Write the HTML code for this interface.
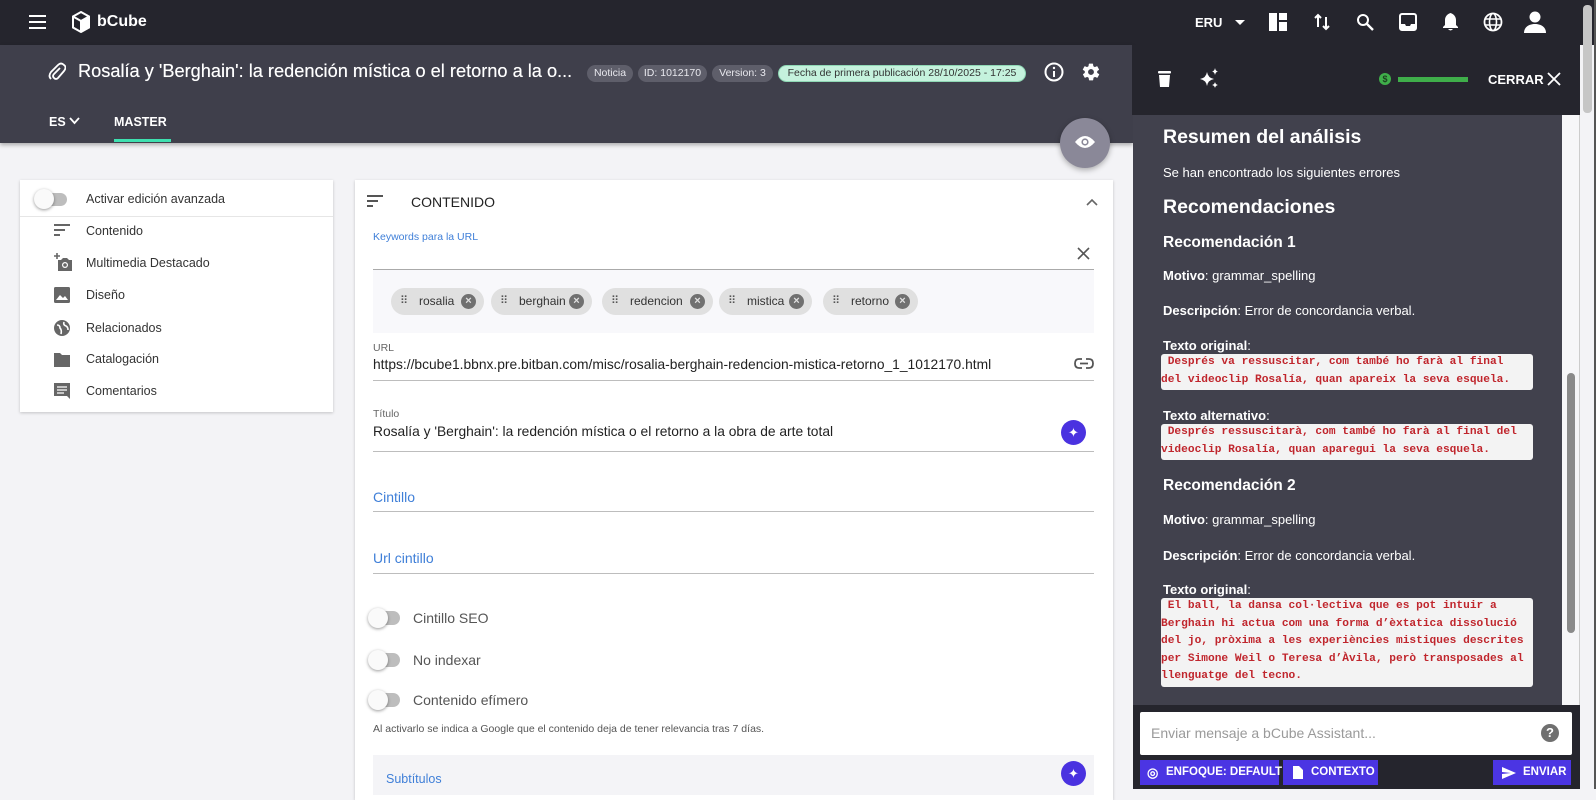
<!DOCTYPE html>
<html><head><meta charset="utf-8"><style>
*{box-sizing:border-box;margin:0;padding:0}
body{width:1596px;height:789px;overflow:hidden;background:#f3f3f6;font-family:"Liberation Sans",sans-serif;position:relative;color:#333}
.a{position:absolute}
.top{left:0;top:0;width:1596px;height:45px;background:#25252d}
.hdr{left:0;top:45px;width:1133px;height:98px;background:#3f3f4b;box-shadow:0 2px 4px rgba(0,0,0,.3)}
.w{color:#fff}
.badge{top:65px;height:17px;border-radius:9px;background:#5e5e6a;color:#e8e8ee;font-size:10.5px;line-height:17px;text-align:center;white-space:nowrap}
.card{background:#fff;box-shadow:0 1px 3px rgba(0,0,0,.2)}
.si{left:86px;font-size:12.5px;color:#333}
.ic{left:54px;width:16px;height:16px}
.lbl{font-size:10.5px;color:#3f7fd8}
.line{height:1px;background:#bdbdbd}
.chip{top:288px;height:27px;border-radius:14px;background:#e0e0e0;font-size:12px;color:#333;line-height:27px}
.chip .dots{position:absolute;left:9px;top:0;font-size:11px;color:#555;letter-spacing:-1px}
.chip .t{position:absolute;left:28px}
.chip .x{position:absolute;right:8px;top:6px;width:15px;height:15px;border-radius:50%;background:#707070;color:#e0e0e0;font-size:11px;line-height:15px;text-align:center;font-weight:bold}
.tg{left:372px;width:28px;height:14px;border-radius:7px;background:#bdbdbd}
.tg:after{content:"";position:absolute;left:-4px;top:-3px;width:20px;height:20px;border-radius:50%;background:#fafafa;box-shadow:0 1px 3px rgba(0,0,0,.4)}
.ai{width:25px;height:25px;border-radius:50%;background:#4a32e0;color:#fff;font-size:13px;line-height:25px;text-align:center}
.pc{left:1163px;color:#fff;font-size:13px}
.pc b{font-weight:bold}
.code{left:1161px;width:372px;background:#f3f3f3;border-radius:3px;color:#c0262d;font-family:"Liberation Mono",monospace;font-size:11.2px;line-height:17.5px;white-space:pre;font-weight:bold}
.btn{top:760px;height:25px;background:#4b35e3;color:#fff;font-size:11.5px;font-weight:bold;line-height:25px;white-space:nowrap}
</style></head><body>
<div class="a top"></div>
<div class="a" style="left:29px;top:15px;width:17px;height:2px;background:#fff;box-shadow:0 6px 0 #fff,0 12px 0 #fff"></div>
<svg class="a" style="left:71px;top:11px" width="20" height="22" viewBox="0 0 20 22"><path d="M10 1L18 5.5V16.5L10 21L2 16.5V5.5Z M2 5.5L10 10L18 5.5 M10 10V21" fill="none" stroke="#fff" stroke-width="2"/><path d="M10 10L18 5.5V16.5L10 21Z" fill="#fff"/></svg>
<div class="a w" style="left:97px;top:13px;font-size:16px;font-weight:bold">bCube</div>
<div class="a w" style="left:1195px;top:15px;font-size:13px;font-weight:bold">ERU</div>
<div class="a" style="left:1235px;top:20px;border:5px solid transparent;border-top-color:#fff"></div>
<svg class="a" style="left:1269px;top:13px" width="18" height="18"><rect x="0" y="0" width="8" height="18" fill="#fff"/><rect x="10" y="0" width="8" height="7" fill="#fff"/><rect x="10" y="9" width="8" height="9" fill="#fff"/></svg>
<svg class="a" style="left:1313px;top:13px" width="18" height="18"><path d="M5 2V14M2 5L5 2L8 5M13 16V4M10 13L13 16L16 13" stroke="#fff" stroke-width="2" fill="none"/></svg>
<svg class="a" style="left:1356px;top:13px" width="18" height="18"><circle cx="7" cy="7" r="5" stroke="#fff" stroke-width="2" fill="none"/><path d="M11 11L17 17" stroke="#fff" stroke-width="2.4"/></svg>
<svg class="a" style="left:1399px;top:13px" width="18" height="18"><rect x="1" y="1" width="16" height="16" rx="2" stroke="#fff" stroke-width="2" fill="none"/><path d="M1 11H6L7 13H11L12 11H17V17H1Z" fill="#fff"/></svg>
<svg class="a" style="left:1442px;top:12px" width="17" height="20"><path d="M8.5 1C5 2 3 5 3 8V13L1 15V16H16V15L14 13V8C14 5 12 2 8.5 1Z M6 17H11Q8.5 20 6 17Z" fill="#fff"/></svg>
<svg class="a" style="left:1483px;top:12px" width="20" height="20"><circle cx="10" cy="10" r="8.5" stroke="#fff" stroke-width="1.8" fill="none"/><ellipse cx="10" cy="10" rx="3.5" ry="8.5" stroke="#fff" stroke-width="1.6" fill="none"/><path d="M2 7H18M2 13H18" stroke="#fff" stroke-width="1.6"/></svg>
<svg class="a" style="left:1523px;top:10px" width="24" height="24"><circle cx="12" cy="7" r="5.5" fill="#fff"/><path d="M1 23C1 17 6 14 12 14S23 17 23 23Z" fill="#fff"/></svg>

<div class="a hdr"></div>
<svg class="a" style="left:48px;top:62px" width="18" height="20" viewBox="0 0 18 20"><path d="M12 6L6 12Q4 14 6 16Q8 18 10 16L16 9Q19 5 16 3Q13 0 10 3L3 10Q0 14 3 17" stroke="#fff" stroke-width="1.8" fill="none"/></svg>
<div class="a w" style="left:78px;top:61px;font-size:18.2px;white-space:nowrap;text-shadow:0 0 .4px #fff">Rosalía y 'Berghain': la redención mística o el retorno a la o...</div>
<div class="a badge" style="left:587px;width:46px">Noticia</div>
<div class="a badge" style="left:638px;width:69px">ID: 1012170</div>
<div class="a badge" style="left:712px;width:61px">Version: 3</div>
<div class="a badge" style="left:778px;width:248px;background:#c5f2dd;color:#333;border:1px solid #8fd8b5;line-height:15px">Fecha de primera publicación 28/10/2025 - 17:25</div>
<svg class="a" style="left:1044px;top:62px" width="20" height="20"><circle cx="10" cy="10" r="8.5" stroke="#fff" stroke-width="2" fill="none"/><rect x="9" y="9" width="2" height="6" fill="#fff"/><circle cx="10" cy="6" r="1.2" fill="#fff"/></svg>
<svg class="a" style="left:1081px;top:62px" width="20" height="20" viewBox="0 0 24 24"><path fill="#fff" d="M19.4 13c0-.3.1-.7.1-1s0-.7-.1-1l2.1-1.6c.2-.2.2-.4.1-.6l-2-3.5c-.1-.2-.4-.3-.6-.2l-2.5 1c-.5-.4-1.1-.7-1.7-1l-.4-2.7c0-.2-.2-.4-.5-.4h-4c-.2 0-.4.2-.5.4l-.4 2.7c-.6.3-1.1.6-1.7 1l-2.5-1c-.2-.1-.5 0-.6.2l-2 3.5c-.1.2 0 .5.1.6L4.6 11c0 .3-.1.7-.1 1s0 .7.1 1l-2.1 1.6c-.2.2-.2.4-.1.6l2 3.5c.1.2.4.3.6.2l2.5-1c.5.4 1.1.7 1.7 1l.4 2.7c0 .2.2.4.5.4h4c.2 0 .4-.2.5-.4l.4-2.7c.6-.3 1.2-.6 1.7-1l2.5 1c.2.1.5 0 .6-.2l2-3.5c.1-.2.1-.5-.1-.6L19.4 13zM12 15.5c-1.9 0-3.5-1.6-3.5-3.5s1.6-3.5 3.5-3.5 3.5 1.6 3.5 3.5-1.6 3.5-3.5 3.5z"/></svg>
<div class="a w" style="left:49px;top:115px;font-size:12.5px;font-weight:bold">ES</div>
<svg class="a" style="left:69px;top:117px" width="11" height="8"><path d="M1 1L5.5 6L10 1" stroke="#fff" stroke-width="1.8" fill="none"/></svg>
<div class="a w" style="left:114px;top:115px;font-size:12.5px;font-weight:bold">MASTER</div>
<div class="a" style="left:114px;top:139px;width:57px;height:3px;background:#3ee0b0"></div>
<div class="a" style="left:1060px;top:118px;width:50px;height:50px;border-radius:50%;background:#8a8898;box-shadow:0 2px 6px rgba(0,0,0,.3)"></div>
<svg class="a" style="left:1074px;top:133px" width="22" height="18"><path d="M1 9Q11 -3 21 9Q11 21 1 9Z" fill="#fff"/><circle cx="11" cy="9" r="3.6" fill="#8a8898"/><circle cx="11" cy="9" r="2" fill="#fff"/></svg>

<div class="a card" style="left:20px;top:180px;width:313px;height:232px"></div>
<div class="a" style="left:20px;top:216px;width:313px;height:1px;background:#e6e6e6"></div>
<div class="a" style="left:37px;top:193px;width:30px;height:13px;border-radius:7px;background:#bdbdbd"></div>
<div class="a" style="left:34px;top:189px;width:20px;height:20px;border-radius:50%;background:#fafafa;box-shadow:0 1px 3px rgba(0,0,0,.4)"></div>
<div class="a si" style="top:192px">Activar edición avanzada</div>
<svg class="a ic" style="top:223px"><path d="M0 2H16M0 7H11M0 12H6" stroke="#666" stroke-width="2"/></svg>
<div class="a si" style="top:224px">Contenido</div>
<svg class="a ic" style="top:253px;width:18px;height:18px"><path d="M3 0V6M0 3H6" stroke="#666" stroke-width="1.6"/><path d="M4 7H7L9 5H13L15 7H18V18H4Z" fill="#666"/><circle cx="11" cy="12" r="3" fill="#fff"/><circle cx="11" cy="12" r="1.8" fill="#666"/></svg>
<div class="a si" style="top:256px">Multimedia Destacado</div>
<svg class="a ic" style="top:287px"><rect x="0" y="0" width="16" height="16" rx="1.5" fill="#666"/><path d="M2 13L6 8L9 11L11 9L14 13Z" fill="#fff"/></svg>
<div class="a si" style="top:288px">Diseño</div>
<svg class="a ic" style="top:320px"><circle cx="8" cy="8" r="8" fill="#666"/><path d="M3 5Q6 5 6 8Q8 10 7 14M10 2Q9 5 12 6Q14 7 14 10" stroke="#fff" stroke-width="1.6" fill="none"/></svg>
<div class="a si" style="top:321px">Relacionados</div>
<svg class="a ic" style="top:352px;height:15px"><path d="M0 1H6L8 3H16V15H0Z" fill="#666"/></svg>
<div class="a si" style="top:352px">Catalogación</div>
<svg class="a ic" style="top:383px;height:18px"><path d="M0 0H16V16L13 13H0Z" fill="#666"/><path d="M3 4H13M3 7H13M3 10H10" stroke="#fff" stroke-width="1.3"/></svg>
<div class="a si" style="top:384px">Comentarios</div>

<div class="a card" style="left:355px;top:180px;width:758px;height:620px"></div>
<svg class="a" style="left:367px;top:194px" width="16" height="14"><path d="M0 2H16M0 7H11M0 12H6" stroke="#555" stroke-width="2"/></svg>
<div class="a" style="left:411px;top:194px;font-size:14px;color:#222">CONTENIDO</div>
<svg class="a" style="left:1086px;top:198px" width="12" height="8"><path d="M1 7L6 2L11 7" stroke="#666" stroke-width="1.6" fill="none"/></svg>
<div class="a lbl" style="left:373px;top:231px">Keywords para la URL</div>
<svg class="a" style="left:1077px;top:247px" width="13" height="13"><path d="M1 1L12 12M12 1L1 12" stroke="#555" stroke-width="1.6"/></svg>
<div class="a line" style="left:373px;top:269px;width:721px;background:#aaa"></div>
<div class="a" style="left:373px;top:270px;width:721px;height:63px;background:#f8f8fb"></div>
<div class="a chip" style="left:391px;width:93px"><span class="dots">⠿</span><span class="t">rosalia</span><span class="x">×</span></div>
<div class="a chip" style="left:491px;width:101px"><span class="dots">⠿</span><span class="t">berghain</span><span class="x">×</span></div>
<div class="a chip" style="left:602px;width:111px"><span class="dots">⠿</span><span class="t">redencion</span><span class="x">×</span></div>
<div class="a chip" style="left:719px;width:93px"><span class="dots">⠿</span><span class="t">mistica</span><span class="x">×</span></div>
<div class="a chip" style="left:823px;width:95px"><span class="dots">⠿</span><span class="t">retorno</span><span class="x">×</span></div>
<div class="a lbl" style="left:373px;top:342px;color:#666">URL</div>
<div class="a" style="left:373px;top:357px;font-size:13.8px;color:#222">https://bcube1.bbnx.pre.bitban.com/misc/rosalia-berghain-redencion-mistica-retorno_1_1012170.html</div>
<svg class="a" style="left:1074px;top:358px" width="20" height="11"><path d="M8 1H5Q1 1 1 5.5Q1 10 5 10H8M12 1H15Q19 1 19 5.5Q19 10 15 10H12M6 5.5H14" stroke="#555" stroke-width="1.8" fill="none"/></svg>
<div class="a line" style="left:373px;top:380px;width:721px"></div>
<div class="a lbl" style="left:373px;top:408px;color:#666">Título</div>
<div class="a" style="left:373px;top:424px;font-size:13.8px;color:#222">Rosalía y 'Berghain': la redención mística o el retorno a la obra de arte total</div>
<div class="a ai" style="left:1061px;top:420px">✦</div>
<div class="a line" style="left:373px;top:451px;width:721px"></div>
<div class="a" style="left:373px;top:489px;font-size:14px;color:#3f7fd8">Cintillo</div>
<div class="a line" style="left:373px;top:511px;width:721px"></div>
<div class="a" style="left:373px;top:550px;font-size:14px;color:#3f7fd8">Url cintillo</div>
<div class="a line" style="left:373px;top:573px;width:721px"></div>
<div class="a tg" style="top:611px"></div>
<div class="a" style="left:413px;top:610px;font-size:14px;color:#555">Cintillo SEO</div>
<div class="a tg" style="top:653px"></div>
<div class="a" style="left:413px;top:652px;font-size:14px;color:#555">No indexar</div>
<div class="a tg" style="top:693px"></div>
<div class="a" style="left:413px;top:692px;font-size:14px;color:#555">Contenido efímero</div>
<div class="a" style="left:373px;top:723px;font-size:10.5px;color:#555">Al activarlo se indica a Google que el contenido deja de tener relevancia tras 7 días.</div>
<div class="a" style="left:373px;top:755px;width:721px;height:40px;background:#f4f4f7"></div>
<div class="a" style="left:386px;top:772px;font-size:12.5px;color:#3f7fd8">Subtítulos</div>
<div class="a ai" style="left:1061px;top:761px">✦</div>

<div class="a" style="left:1132px;top:45px;width:448px;height:70px;background:#25252d"></div>
<div class="a" style="left:1133px;top:115px;width:429px;height:590px;background:#41414d"></div>
<div class="a" style="left:1562px;top:115px;width:18px;height:590px;background:#f6f6f8;border-right:1px solid #ccc"></div>
<div class="a" style="left:1567px;top:373px;width:8px;height:260px;border-radius:4px;background:#8a8a8a"></div>
<div class="a" style="left:1583px;top:5px;width:9px;height:108px;border-radius:4px;background:#c6c6c6"></div>
<svg class="a" style="left:1158px;top:70px" width="13" height="17"><rect x="0" y="1" width="13" height="2.5" rx="1" fill="#fff"/><path d="M1 5H12L11 17H2Z" fill="#fff"/></svg>
<svg class="a" style="left:1199px;top:68px" width="21" height="21"><path d="M8 4Q9 10 15 11Q9 12 8 18Q7 12 1 11Q7 10 8 4Z" fill="#fff"/><path d="M16 0Q16.5 3 19 3.5Q16.5 4 16 7Q15.5 4 13 3.5Q15.5 3 16 0Z M16 14Q16.5 16.5 19 17Q16.5 17.5 16 20Q15.5 17.5 13 17Q15.5 16.5 16 14Z" fill="#fff"/></svg>
<div class="a" style="left:1379px;top:73px;width:12px;height:12px;border-radius:50%;background:#3fae4a;color:#1d3d20;font-size:9px;line-height:12px;text-align:center;font-weight:bold">$</div>
<div class="a" style="left:1398px;top:77px;width:70px;height:5px;background:#3fae4a"></div>
<div class="a w" style="left:1488px;top:72px;font-size:13px;font-weight:bold">CERRAR</div>
<svg class="a" style="left:1547px;top:72px" width="14" height="14"><path d="M1 1L13 13M13 1L1 13" stroke="#fff" stroke-width="1.8"/></svg>

<div class="a pc" style="top:126px;font-size:19.5px;font-weight:bold">Resumen del análisis</div>
<div class="a pc" style="top:165px">Se han encontrado los siguientes errores</div>
<div class="a pc" style="top:196px;font-size:19.5px;font-weight:bold">Recomendaciones</div>
<div class="a pc" style="top:234px;font-size:15.5px;font-weight:bold">Recomendación 1</div>
<div class="a pc" style="top:268px"><b>Motivo</b>: grammar_spelling</div>
<div class="a pc" style="top:303px"><b>Descripción</b>: Error de concordancia verbal.</div>
<div class="a pc" style="top:338px"><b>Texto original</b>:</div>
<div class="a code" style="top:354px;height:36px"> Després va ressuscitar, com també ho farà al final
del videoclip Rosalía, quan apareix la seva esquela.</div>
<div class="a pc" style="top:408px"><b>Texto alternativo</b>:</div>
<div class="a code" style="top:424px;height:36px"> Després ressuscitarà, com també ho farà al final del
videoclip Rosalía, quan aparegui la seva esquela.</div>
<div class="a pc" style="top:477px;font-size:15.5px;font-weight:bold">Recomendación 2</div>
<div class="a pc" style="top:512px"><b>Motivo</b>: grammar_spelling</div>
<div class="a pc" style="top:548px"><b>Descripción</b>: Error de concordancia verbal.</div>
<div class="a pc" style="top:582px"><b>Texto original</b>:</div>
<div class="a code" style="top:598px;height:89px"> El ball, la dansa col·lectiva que es pot intuir a
Berghain hi actua com una forma d’èxtatica dissolució
del jo, pròxima a les experiències mistiques descrites
per Simone Weil o Teresa d’Àvila, però transposades al
llenguatge del tecno.</div>

<div class="a" style="left:1133px;top:705px;width:447px;height:84px;background:#25252d"></div>
<div class="a" style="left:1140px;top:712px;width:432px;height:43px;background:#fff;border-radius:2px"></div>
<div class="a" style="left:1151px;top:725px;font-size:14px;color:#9a9a9a">Enviar mensaje a bCube Assistant...</div>
<div class="a" style="left:1541px;top:724px;width:18px;height:18px;border-radius:50%;background:#6f6f6f;color:#fff;font-size:13px;font-weight:bold;line-height:18px;text-align:center">?</div>
<div class="a btn" style="left:1140px;width:139px"><span style="position:absolute;left:7px;font-size:13px">◎</span><span style="position:absolute;left:26px">ENFOQUE: DEFAULT</span></div>
<div class="a btn" style="left:1283px;width:95px"><svg style="position:absolute;left:10px;top:6px" width="10" height="13"><path d="M0 0H6L10 4V13H0Z" fill="#fff"/></svg><span style="position:absolute;left:28px">CONTEXTO</span></div>
<div class="a btn" style="left:1493px;width:78px"><svg style="position:absolute;left:9px;top:7px" width="14" height="12"><path d="M0 0L14 6L0 12V7L9 6L0 5Z" fill="#fff"/></svg><span style="position:absolute;left:30px">ENVIAR</span></div>
<div class="a" style="left:1594px;top:0;width:2px;height:789px;background:#555"></div>
</body></html>
